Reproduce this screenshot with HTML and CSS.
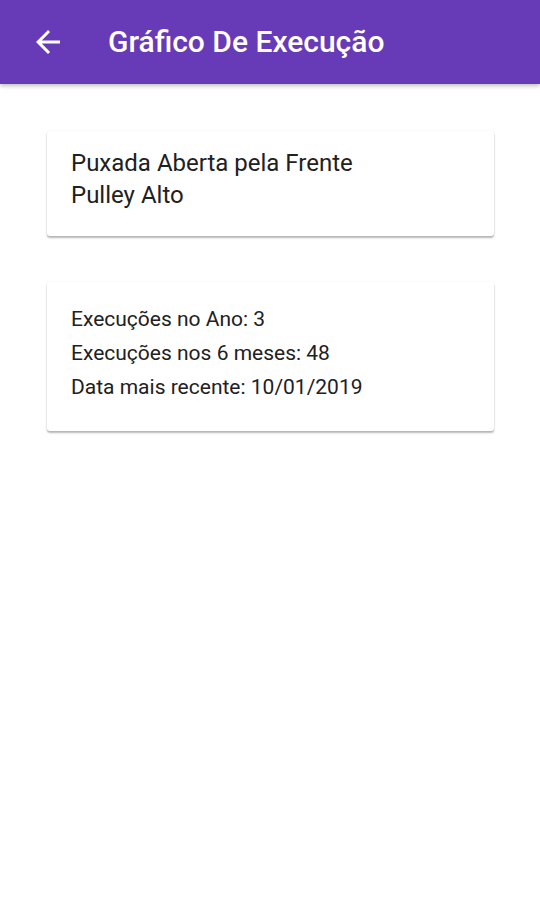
FILE: index.html
```html
<!DOCTYPE html>
<html lang="pt">
<head>
<meta charset="utf-8">
<link rel="stylesheet" href="styles.css">
</head>
<body>
<header class="appbar">
  <svg class="back" width="36" height="36" viewBox="0 0 24 24"><path d="M20 11H7.83l5.59-5.59L12 4l-8 8 8 8 1.41-1.41L7.83 13H20v-2z" fill="#fff"/></svg>
  <h1 class="title">Gráfico De Execução</h1>
</header>
<main class="content">
  <section class="card card-name">
    <p>Puxada Aberta pela Frente</p>
    <p>Pulley Alto</p>
  </section>
  <section class="card card-stats">
    <p>Execuções no Ano: 3</p>
    <p>Execuções nos 6 meses: 48</p>
    <p>Data mais recente: 10/01/2019</p>
  </section>
</main>
</body>
</html>
```
FILE: styles.css
```css
* { box-sizing: border-box; }
html, body { margin: 0; padding: 0; background: #fff; }
html, body { min-height: 100%; }
body { font-family: Roboto, "Noto Sans", sans-serif; color: #212121; min-height: 922px; }
.appbar {
  height: 84px;
  background: #673ab7;
  display: flex;
  align-items: center;
  padding: 0 0 0 30px;
  box-shadow: 0 2px 4px rgba(0,0,0,0.25);
  position: relative;
}
.back { width: 36px; height: 36px; display: block; flex: none; }
.title {
  margin: 0 0 0 42px;
  color: #fff;
  font-size: 30px;
  font-weight: 500;
  line-height: 1;
}
.content { padding: 47px 46px 40px 47px; display: flex; flex-direction: column; gap: 46px; }
.card {
  background: #fff;
  border-radius: 3px;
  box-shadow: 0 2px 2px rgba(0,0,0,0.28), 0 0 2px rgba(0,0,0,0.08);
}
.card p { margin: 0; }
.card-name { padding: 16px 24px 25px; }
.card-name p { font-size: 24px; line-height: 32px; }
.card-stats { padding: 20px 24px 27px; }
.card-stats p { font-size: 21px; line-height: 34px; }
```
